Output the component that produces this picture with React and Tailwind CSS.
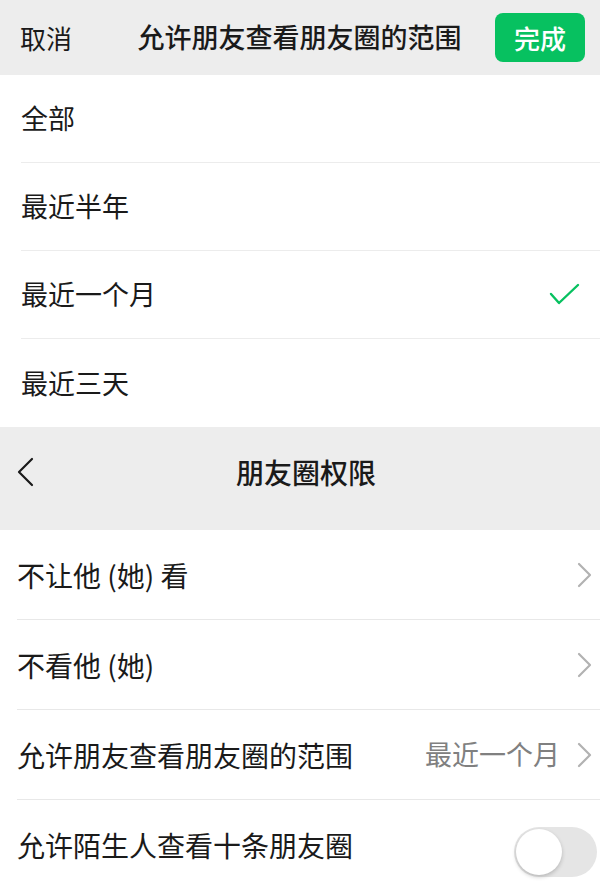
const RANGES = ['全部', '最近半年', '最近一个月', '最近三天'];
const SELECTED = '最近一个月';

const FONT = 'font-["Noto_Sans_CJK_SC","Noto_Sans",sans-serif]';

function Chevron() {
  return (
    <svg width="16" height="26" viewBox="0 0 16 26" className="shrink-0">
      <path d="M2 2 L13 13 L2 24" fill="none" stroke="#b2b2b2" strokeWidth="2.2" strokeLinecap="round" strokeLinejoin="round" />
    </svg>
  );
}

function Toggle({ on = false }) {
  return (
    <div className={`w-[83px] h-[50px] rounded-full p-[2px] flex items-center ${on ? 'bg-[#07c160] justify-end' : 'bg-[#e5e5e5] justify-start'}`}>
      <div className="w-[46px] h-[46px] rounded-full bg-white shadow-[0_2px_4px_rgba(0,0,0,0.2)]" />
    </div>
  );
}

function PermRow({ label, value, toggle, last }) {
  return (
    <div className="pl-[17px]">
      <div className={`h-[90px] flex items-center ${toggle ? 'pr-[3px]' : 'pr-[7px]'} ${last ? '' : 'border-b border-[#e8e8e8]'}`}>
        <span className="flex-1 text-[28px] text-[#1a1a1a]">{label}</span>
        {value && <span className="text-[27px] text-[#808080] mr-[17px]">{value}</span>}
        {toggle ? (
          <div className="mt-[14px]"><Toggle /></div>
        ) : (
          <Chevron />
        )}
      </div>
    </div>
  );
}

export default function App() {
  return (
    <div className={`w-[600px] h-[884px] overflow-hidden bg-white ${FONT}`}>
      {/* 顶部：选择范围 */}
      <div className="h-[75px] bg-[#ededed] flex items-center pl-[20px] pr-[15px]">
        <span className="text-[26px] text-[#1a1a1a] w-[120px]">取消</span>
        <span className="flex-1 text-center text-[27px] font-medium text-[#1a1a1a] ml-[-6px]">允许朋友查看朋友圈的范围</span>
        <button className="w-[90px] h-[49px] ml-[30px] rounded-[8px] bg-[#07c160] text-white text-[26px] font-medium">完成</button>
      </div>

      <div className="bg-white">
        {RANGES.map((r, i) => (
          <div key={r} className="pl-[21px]">
            <div className={`h-[88px] flex items-center pr-[19px] ${i < RANGES.length - 1 ? 'border-b border-[#ececec]' : ''}`}>
              <span className="flex-1 text-[27px] text-[#1a1a1a]">{r}</span>
              {r === SELECTED && (
                <svg width="32" height="24" viewBox="0 0 32 24">
                  <path d="M2 11 L10 20 L29 2" fill="none" stroke="#07c160" strokeWidth="2.4" strokeLinecap="round" strokeLinejoin="round" />
                </svg>
              )}
            </div>
          </div>
        ))}
      </div>

      {/* 朋友圈权限 */}
      <div className="h-[103px] bg-[#ededed] flex items-start pt-[20px]">
        <div className="w-[70px] pl-[16px] h-[50px] flex items-center">
          <svg width="18" height="30" viewBox="0 0 18 30">
            <path d="M16 2 L3 15 L16 28" fill="none" stroke="#1a1a1a" strokeWidth="2.2" strokeLinecap="round" strokeLinejoin="round" />
          </svg>
        </div>
        <div className="flex-1 text-center text-[28px] font-medium text-[#1a1a1a] pr-[58px] leading-[50px]">朋友圈权限</div>
      </div>

      <div className="bg-white">
        <PermRow label="不让他 (她) 看" />
        <PermRow label="不看他 (她)" />
        <PermRow label="允许朋友查看朋友圈的范围" value="最近一个月" />
        <PermRow label="允许陌生人查看十条朋友圈" toggle last />
      </div>
    </div>
  );
}
